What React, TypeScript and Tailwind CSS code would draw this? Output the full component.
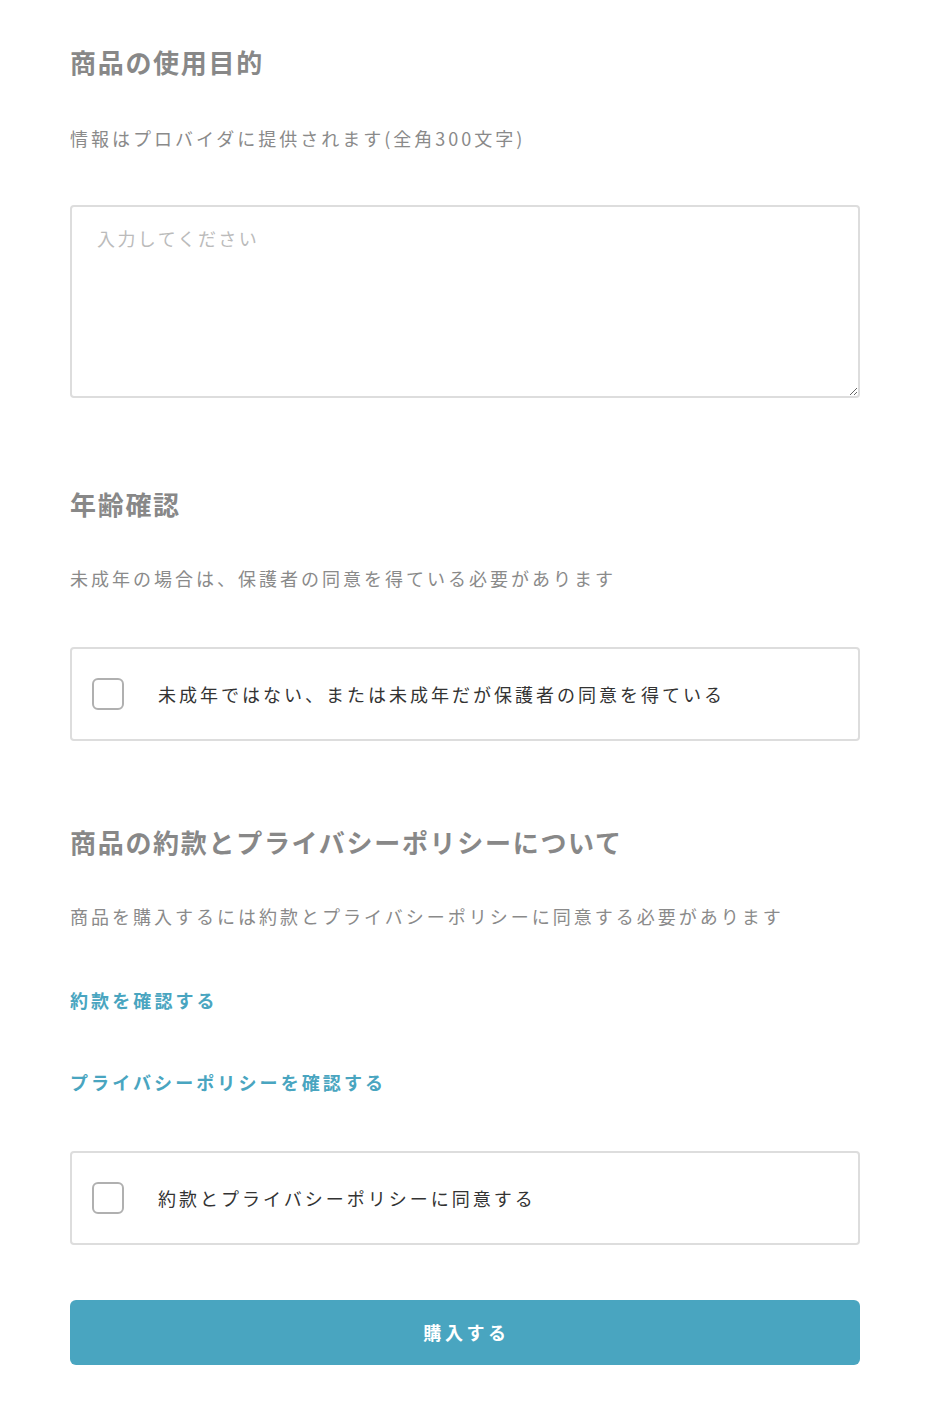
import React, { useState } from 'react';

const font = { fontFamily: '"Noto Sans CJK JP", "Noto Sans", sans-serif' };

const Heading: React.FC<{ children: React.ReactNode; className?: string }> = ({ children, className = '' }) => (
  <h2 className={`text-[26px] leading-[36px] font-bold tracking-[1.7px] text-[#888888] ${className}`}>{children}</h2>
);

const Note: React.FC<{ children: React.ReactNode; className?: string }> = ({ children, className = '' }) => (
  <p className={`text-[18px] leading-[28px] tracking-[3px] text-[#8a8a8a] ${className}`}>{children}</p>
);

const CheckCard: React.FC<{ label: string; className?: string }> = ({ label, className = '' }) => {
  const [checked, setChecked] = useState(false);
  return (
    <label
      className={`flex h-[94px] cursor-pointer items-center gap-[34px] rounded-[4px] border-2 border-[#dddddd] bg-white pl-[20px] ${className}`}
    >
      <input
        type="checkbox"
        checked={checked}
        onChange={() => setChecked(!checked)}
        className="h-[32px] w-[32px] shrink-0 appearance-none rounded-[6px] border-2 border-[#b0b0b0] bg-white checked:border-[#49a5c0] checked:bg-[#49a5c0]"
      />
      <span className="text-[18px] leading-[28px] tracking-[3px] text-[#333333]">{label}</span>
    </label>
  );
};

export default function App() {
  return (
    <div className="min-h-[1412px] bg-white" style={font}>
      <div className="pl-[70px] pr-[84px] pt-[44px] pb-[46px]">
        {/* 使用目的 */}
        <Heading>商品の使用目的</Heading>
        <Note className="mt-[44px]">情報はプロバイダに提供されます(全角300文字)</Note>
        <textarea
          placeholder="入力してください"
          className="mt-[53px] block h-[193px] w-full rounded-[4px] border-2 border-[#dddddd] px-[25px] py-[17px] text-[18px] leading-[28px] tracking-[2.4px] text-[#333333] outline-none placeholder:text-[#bbbbbb]"
        />

        {/* 年齢確認 */}
        <Heading className="mt-[88px]">年齢確認</Heading>
        <Note className="mt-[42px]">未成年の場合は、保護者の同意を得ている必要があります</Note>
        <CheckCard className="mt-[55px]" label="未成年ではない、または未成年だが保護者の同意を得ている" />

        {/* 約款 */}
        <Heading className="mt-[83px]">商品の約款とプライバシーポリシーについて</Heading>
        <Note className="mt-[42px]">商品を購入するには約款とプライバシーポリシーに同意する必要があります</Note>
        <a href="#" className="mt-[56px] block text-[18px] leading-[28px] font-bold tracking-[3.1px] text-[#49a5c0]">
          約款を確認する
        </a>
        <a href="#" className="mt-[54px] block text-[18px] leading-[28px] font-bold tracking-[3.1px] text-[#49a5c0]">
          プライバシーポリシーを確認する
        </a>
        <CheckCard className="mt-[55px]" label="約款とプライバシーポリシーに同意する" />

        <button className="mt-[55px] flex h-[65px] w-full items-center justify-center rounded-[6px] bg-[#49a5c0] pl-[3px] text-[18px] font-bold tracking-[3.6px] text-white">
          購入する
        </button>
      </div>
      <div className="h-[46px] bg-gradient-to-b from-white to-[#f4f4f4]" />
    </div>
  );
}
